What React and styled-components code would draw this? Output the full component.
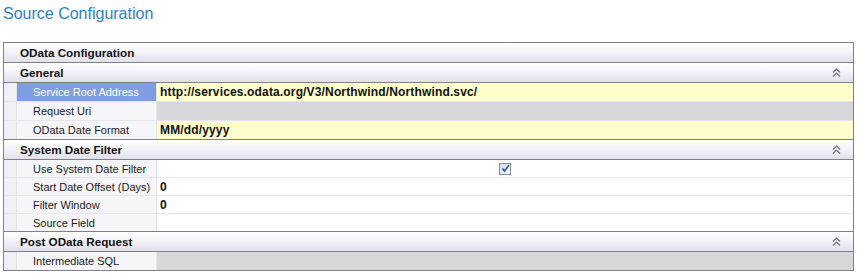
import React from "react";
import styled, { createGlobalStyle } from "styled-components";

const Global = createGlobalStyle`
  html, body { margin: 0; padding: 0; background: #ffffff; }
  body { font-family: "Liberation Sans", Arial, sans-serif; }
`;

const Page = styled.div`
  width: 857px;
  height: 273px;
  padding: 0 3px;
  box-sizing: border-box;
  overflow: hidden;
`;

const Title = styled.h1`
  margin: 0;
  height: 42px;
  padding-top: 4px;
  box-sizing: border-box;
  font-family: "Liberation Sans", Arial, sans-serif;
  font-weight: normal;
  font-size: 16px;
  line-height: 20px;
  color: #2f7fc4;
`;

const Grid = styled.div`
  width: 851px;
  box-sizing: border-box;
  border: 1px solid #808087;
  display: flex;
  flex-direction: column;
`;

const Section = styled.div`
  display: flex;
  flex-direction: column;
`;

const Header = styled.div`
  height: 19px;
  border-bottom: 1px solid #808087;
  background: linear-gradient(to bottom, #ffffff 0%, #f4f3f9 45%, #e1e0eb 100%);
  display: flex;
  align-items: center;
  justify-content: space-between;
  padding: 0 12px 0 16px;
  font-size: 11.7px;
  font-weight: bold;
  color: #111;
`;

const Row = styled.div`
  display: grid;
  grid-template-columns: 13px 140px 1fr;
  height: ${(p) => p.$h}px;
  border-bottom: 1px solid #e6e6ea;
  &:last-child { border-bottom-color: #808087; }
  ${Grid} > ${Section}:last-child > &:last-child { border-bottom: none; }
`;

const Indent = styled.div`
  background: #efeff5;
  border-right: 1px solid #e2e2e8;
`;

const Label = styled.div`
  background: ${(p) => (p.$selected ? "#7e9de3" : "#f6f6fa")};
  color: ${(p) => (p.$selected ? "#ffffff" : "#1a1a1a")};
  border-right: 1px solid #e2e2e8;
  padding-left: 16px;
  font-size: 11px;
  display: flex;
  align-items: center;
  white-space: nowrap;
  overflow: hidden;
`;

const bgFor = { edit: "#ffffcc", ro: "#d7d6db", plain: "#ffffff" };

const Value = styled.div`
  background: ${(p) => bgFor[p.$kind]};
  padding-left: 3px;
  font-size: 12px;
  font-weight: bold;
  letter-spacing: 0.15px;
  color: #111;
  display: flex;
  align-items: center;
  justify-content: ${(p) => (p.$center ? "center" : "flex-start")};
  white-space: nowrap;
`;

const Box = styled.span`
  width: 10px;
  height: 10px;
  border: 1px solid #8d8d95;
  background: linear-gradient(135deg, #d9deea, #f6f7fb);
  display: inline-flex;
  align-items: center;
  justify-content: center;
  margin-right: 3px;
`;

const Collapse = () => (
  <svg width="9" height="9" viewBox="0 0 9 9" fill="none" stroke="#6b6b73" strokeWidth="1.2">
    <polyline points="1,4.5 4.5,1 8,4.5" />
    <polyline points="1,8.5 4.5,5 8,8.5" />
  </svg>
);

const Check = () => (
  <Box>
    <svg width="9" height="9" viewBox="0 0 9 9" fill="none" stroke="#3d5fae" strokeWidth="1.8">
      <polyline points="1.5,4.5 3.5,7 7.8,1.2" />
    </svg>
  </Box>
);

const sections = [
  {
    title: "General",
    h: 18,
    rows: [
      { label: "Service Root Address", value: "http://services.odata.org/V3/Northwind/Northwind.svc/", kind: "edit", selected: true },
      { label: "Request Uri", value: "", kind: "ro" },
      { label: "OData Date Format", value: "MM/dd/yyyy", kind: "edit" },
    ],
  },
  {
    title: "System Date Filter",
    h: 17,
    rows: [
      { label: "Use System Date Filter", check: true, kind: "plain" },
      { label: "Start Date Offset (Days)", value: "0", kind: "plain" },
      { label: "Filter Window", value: "0", kind: "plain" },
      { label: "Source Field", value: "", kind: "plain" },
    ],
  },
  {
    title: "Post OData Request",
    h: 18,
    rows: [{ label: "Intermediate SQL", value: "", kind: "ro" }],
  },
];

export default function App() {
  return (
    <Page>
      <Global />
      <Title>Source Configuration</Title>
      <Grid>
        <Section>
          <Header>OData Configuration</Header>
        </Section>
        {sections.map((s) => (
          <Section key={s.title}>
            <Header>
              <span>{s.title}</span>
              <Collapse />
            </Header>
            {s.rows.map((r) => (
              <Row key={r.label} $h={s.h}>
                <Indent />
                <Label $selected={r.selected}>{r.label}</Label>
                <Value $kind={r.kind} $center={r.check}>
                  {r.check ? <Check /> : r.value}
                </Value>
              </Row>
            ))}
          </Section>
        ))}
      </Grid>
    </Page>
  );
}
